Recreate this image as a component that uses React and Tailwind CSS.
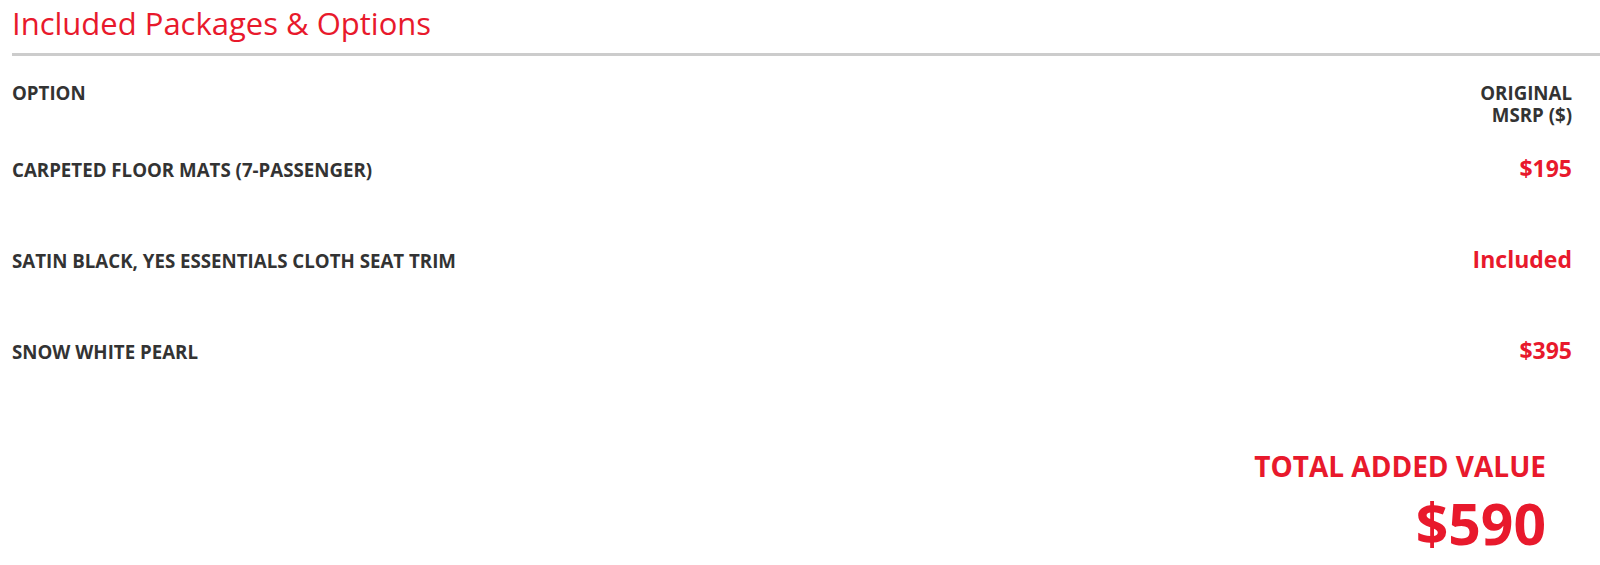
import React from 'react'

const options = [
  { name: 'CARPETED FLOOR MATS (7-PASSENGER)', price: '$195' },
  { name: 'SATIN BLACK, YES ESSENTIALS CLOTH SEAT TRIM', price: 'Included' },
  { name: 'SNOW WHITE PEARL', price: '$395' },
]

export default function App() {
  return (
    <div className="min-h-screen bg-white pl-3 font-['Open_Sans',sans-serif] text-[#333333]">
      {/* titulo */}
      <h2 className="pt-[5px] text-[31px] leading-[36px] font-normal text-[#e8192c]">
        Included Packages &amp; Options
      </h2>
      <div className="mt-[12px] h-[3px] bg-[#cccccc]" />

      <div className="pr-[28px]">
        {/* cabecera */}
        <div className="mt-[26px] flex items-start justify-between text-[18.7px] leading-[22px] font-bold">
          <div>OPTION</div>
          <div className="flex flex-col items-end">
            <span>ORIGINAL</span>
            <span>MSRP ($)</span>
          </div>
        </div>

        {/* filas */}
        <div className="mt-[27px]">
          {options.map((o) => (
            <div key={o.name} className="flex h-[91px] items-baseline justify-between">
              <div className="text-[18.7px] leading-[22px] font-bold">{o.name}</div>
              <div className="text-[23px] leading-[30px] font-bold text-[#e8192c]">{o.price}</div>
            </div>
          ))}
        </div>

        {/* total */}
        <div className="mt-[24px] flex flex-col items-end pr-[26px] font-bold text-[#e8192c]">
          <div className="text-[28px] leading-[32px]">TOTAL ADDED VALUE</div>
          <div className="mt-[11px] text-[57px] leading-[60px]">$590</div>
        </div>
      </div>
    </div>
  )
}
